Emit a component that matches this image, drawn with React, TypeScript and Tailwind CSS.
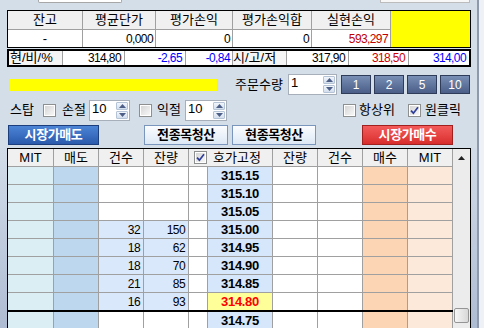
import React from 'react';

type OrderRow = { price: string; cnt?: string; qty?: string; cur?: boolean };

const ROWS: OrderRow[] = [
  { price: '315.15' },
  { price: '315.10' },
  { price: '315.05' },
  { price: '315.00', cnt: '32', qty: '150' },
  { price: '314.95', cnt: '18', qty: '62' },
  { price: '314.90', cnt: '18', qty: '70' },
  { price: '314.85', cnt: '21', qty: '85' },
  { price: '314.80', cnt: '16', qty: '93', cur: true },
  { price: '314.75' },
];

function CheckBox({ checked = false }: { checked?: boolean }) {
  return (
    <span className="w-[13px] h-[13px] shrink-0 border border-[#8e8f8f] bg-white p-px flex">
      <span className="flex-1 bg-linear-to-br from-[#d6d6d6] to-[#f7f7f7] flex items-center justify-center">
        {checked && (
          <svg width="9" height="9" viewBox="0 0 9 9">
            <path d="M1 4.6 L3.4 7.2 L8 1.2" fill="none" stroke="#2f3f98" strokeWidth="1.7" />
          </svg>
        )}
      </span>
    </span>
  );
}

function SpinArrow({ up = false }: { up?: boolean }) {
  return (
    <div className="flex-1 bg-linear-to-b from-[#f2f6fb] to-[#d3deed] border border-[#b5c3d6] rounded-[1px] flex items-center justify-center">
      <svg width="7" height="4" viewBox="0 0 7 4">
        <path d={up ? 'M0 4 L3.5 0 L7 4 Z' : 'M0 0 L3.5 4 L7 0 Z'} fill="#4d5f86" />
      </svg>
    </div>
  );
}

function Spin({ value, width }: { value: string; width: string }) {
  return (
    <div className={`${width} h-[21px] shrink-0 bg-white border border-[#a7afba] flex`}>
      <span className="flex-1 pl-[2px] text-[13px] leading-[15px]">{value}</span>
      <div className="w-[14px] flex flex-col gap-px p-px">
        <SpinArrow up />
        <SpinArrow />
      </div>
    </div>
  );
}

function QtyButton({ label }: { label: string }) {
  return (
    <div className="w-[30px] h-[19px] border border-[#2e3c5a] bg-linear-to-b from-[#7a8fb5] to-[#4a5e87] text-white text-[12px] flex items-center justify-center">
      {label}
    </div>
  );
}

function OrderBook() {
  return (
    <div className="flex">
      <div className="w-[7px] bg-linear-to-b from-[#d2dce9] to-[#aab8d0]" />
      <div className="w-[464px] h-[200px] border border-black bg-white flex overflow-hidden">
        <div className="w-[445px] flex flex-col">
          {/* header */}
          <div className="h-[18px] shrink-0 flex border-b border-[#a0a0a0] bg-[#f0f0f0] text-[13px]">
            <div className="w-[46px] border-r border-[#a0a0a0] flex items-center justify-center">MIT</div>
            <div className="w-[45px] border-r border-[#a0a0a0] flex items-center justify-center">매도</div>
            <div className="w-[45px] border-r border-[#a0a0a0] flex items-center justify-center">건수</div>
            <div className="w-[45px] border-r border-[#a0a0a0] flex items-center justify-center">잔량</div>
            <div className="w-[84px] border-r border-[#a0a0a0] flex items-center pl-[5px] gap-[6px]">
              <CheckBox checked />
              <span>호가고정</span>
            </div>
            <div className="w-[45px] border-r border-[#a0a0a0] flex items-center justify-center">잔량</div>
            <div className="w-[45px] border-r border-[#a0a0a0] flex items-center justify-center">건수</div>
            <div className="w-[45px] border-r border-[#a0a0a0] flex items-center justify-center">매수</div>
            <div className="w-[45px] border-r border-[#a0a0a0] flex items-center justify-center">MIT</div>
          </div>
          {ROWS.map((r) => {
            const filled = r.cnt ? 'bg-[#dae8fb]' : 'bg-white';
            return (
              <div
                key={r.price}
                className={
                  r.cur
                    ? 'h-[19px] shrink-0 flex border-b-2 border-black'
                    : 'h-[18px] shrink-0 flex border-b border-[#a0a0a0]'
                }
              >
                <div className="w-[46px] border-r border-[#a0a0a0] bg-[#dbeef3]" />
                <div className="w-[45px] border-r border-[#a0a0a0] bg-[#bdd7ee]" />
                <div className={`w-[45px] border-r border-[#a0a0a0] ${filled} flex items-center justify-end pr-[3px] text-[12px] leading-[14px] tracking-[-0.6px]`}>
                  {r.cnt}
                </div>
                <div className={`w-[45px] border-r border-[#a0a0a0] ${filled} flex items-center justify-end pr-[3px] text-[12px] leading-[14px] tracking-[-0.6px]`}>
                  {r.qty}
                </div>
                <div className="w-[19px] border-r border-[#a0a0a0] bg-white" />
                <div
                  className={`w-[65px] border-r border-[#a0a0a0] flex items-center justify-center font-bold text-[13px] leading-[14px] tracking-[-0.3px] ${
                    r.cur ? 'bg-[#ffff99] text-[#ff0000]' : 'bg-[#d6e7fb] text-black'
                  }`}
                >
                  {r.price}
                </div>
                <div className="w-[45px] border-r border-[#a0a0a0] bg-white" />
                <div className="w-[45px] border-r border-[#a0a0a0] bg-white" />
                <div className="w-[45px] border-r border-[#a0a0a0] bg-[#fcd5b4]" />
                <div className="w-[45px] border-r border-[#a0a0a0] bg-[#fde9da]" />
              </div>
            );
          })}
        </div>
        {/* scrollbar */}
        <div className="w-[17px] bg-[#ececec] flex flex-col items-center">
          <div className="h-[17px] flex items-center justify-center">
            <svg width="7" height="4" viewBox="0 0 7 4">
              <path d="M0 4 L3.5 0 L7 4 Z" fill="#222" />
            </svg>
          </div>
          <div className="mt-[142px] w-[15px] h-[15px] rounded-[2px] border border-[#959595] bg-linear-to-r from-[#f6f6f6] to-[#d8d8d8]" />
        </div>
      </div>
      <div className="w-[6px] bg-linear-to-b from-[#d2dce9] to-[#aab8d0]" />
    </div>
  );
}

export default function App() {
  return (
    <div className="w-[484px] h-[328px] overflow-hidden bg-[#d4dee9] flex font-['Liberation_Sans','Noto_Sans_CJK_KR',sans-serif] text-black">
      <div className="w-[477px] flex flex-col shrink-0">
        {/* edges of inputs above */}
        <div className="h-[3px] flex shrink-0">
          <div className="ml-[38px] w-[84px] h-[3px] bg-white border border-t-0 border-[#a7a7a7] rounded-b-[2px]" />
          <div className="ml-[258px] w-[90px] h-[3px] bg-[#f7f7f7] border border-t-0 border-[#bcbcbc]" />
        </div>

        {/* summary table */}
        <div className="ml-[7px] mt-[7px] w-[464px] border border-black grid grid-cols-[74px_72px_76px_78px_78px_1fr] grid-rows-[18px_17px] gap-px bg-[#a0a0a0] text-[13px]">
          {['잔고', '평균단가', '평가손익', '평가손익합', '실현손익'].map((h) => (
            <div key={h} className="bg-[#f0f0f0] flex items-center justify-center">
              {h}
            </div>
          ))}
          <div className="row-span-2 bg-[#ffff00]" />
          <div className="bg-white flex items-center justify-center">-</div>
          <div className="bg-white flex items-center justify-end pr-[2px] text-[12px] tracking-[-0.6px]">0,000</div>
          <div className="bg-white flex items-center justify-end pr-[2px] text-[12px] tracking-[-0.6px]">0</div>
          <div className="bg-white flex items-center justify-end pr-[2px] text-[12px] tracking-[-0.6px]">0</div>
          <div className="bg-white flex items-center justify-end pr-[2px] text-[12px] tracking-[-0.6px] text-[#c00000]">593,297</div>
        </div>

        {/* current / high / low */}
        <div className="ml-[7px] mt-px w-[464px] h-[18px] border-2 border-black flex gap-px bg-[#a0a0a0] text-[12px]">
          <div className="w-[53px] bg-[#f5f5f5] flex items-center pl-px text-[13px]">현/비/%</div>
          <div className="w-[61px] bg-white flex items-center justify-end pr-[3px] tracking-[-0.6px]">314,80</div>
          <div className="w-[60px] bg-white flex items-center justify-end pr-[3px] tracking-[-0.6px] text-[#0000ff]">-2,65</div>
          <div className="w-[46px] bg-white flex items-center justify-end pr-[2px] tracking-[-0.6px] text-[#0000ff]">-0,84</div>
          <div className="w-[53px] bg-[#f5f5f5] flex items-center text-[13px]">시/고/저</div>
          <div className="w-[61px] bg-white flex items-center justify-end pr-[3px] tracking-[-0.6px]">317,90</div>
          <div className="w-[59px] bg-white flex items-center justify-end pr-[3px] tracking-[-0.6px] text-[#cc0000]">318,50</div>
          <div className="w-[60px] bg-white flex items-center justify-end pr-[3px] tracking-[-0.6px] text-[#0000ff]">314,00</div>
        </div>

        {/* order qty row */}
        <div className="mt-[7px] h-[21px] flex items-center shrink-0 text-[13px]">
          <div className="ml-[10px] w-[207px] h-[12px] bg-[#ffff00]" />
          <span className="ml-[18px] w-[53px]">주문수량</span>
          <Spin value="1" width="w-[49px]" />
          <div className="ml-[4px] flex gap-[3px]">
            <QtyButton label="1" />
            <QtyButton label="2" />
            <QtyButton label="5" />
            <QtyButton label="10" />
          </div>
        </div>

        {/* stop row */}
        <div className="mt-[5px] h-[20px] flex items-center shrink-0 text-[13px]">
          <span className="ml-[10px] w-[33px]">스탑</span>
          <CheckBox />
          <span className="ml-[6px] w-[27px]">손절</span>
          <Spin value="10" width="w-[41px]" />
          <span className="ml-[9px]">
            <CheckBox />
          </span>
          <span className="ml-[5px] w-[28px]">익절</span>
          <Spin value="10" width="w-[42px]" />
          <span className="ml-[116px]">
            <CheckBox />
          </span>
          <span className="ml-[3px] w-[49px]">항상위</span>
          <CheckBox checked />
          <span className="ml-[4px]">원클릭</span>
        </div>

        {/* market order buttons */}
        <div className="mt-[5px] h-[20px] flex shrink-0 text-[13px] font-bold tracking-[-0.4px]">
          <div className="ml-[8px] w-[91px] border border-[#1d3e7c] bg-linear-to-b from-[#4c84d6] to-[#2a5aac] text-white flex items-center justify-center">
            시장가매도
          </div>
          <div className="ml-[45px] w-[84px] border border-[#7b96bd] bg-linear-to-b from-[#fbfdff] to-[#dde8f5] flex items-center justify-center">
            전종목청산
          </div>
          <div className="ml-[4px] w-[84px] border border-[#7b96bd] bg-linear-to-b from-[#fbfdff] to-[#dde8f5] flex items-center justify-center">
            현종목청산
          </div>
          <div className="ml-[46px] w-[91px] border border-[#a01f1f] bg-linear-to-b from-[#f35a5a] to-[#d82c2c] text-white flex items-center justify-center">
            시장가매수
          </div>
        </div>

        <div className="mt-[3px]">
          <OrderBook />
        </div>
      </div>
      {/* neighbouring panel edge */}
      <div className="flex-1 flex">
        <div className="w-[2px] bg-[#8e99ab]" />
        <div className="flex-1 bg-[#eef2f7]" />
      </div>
    </div>
  );
}
